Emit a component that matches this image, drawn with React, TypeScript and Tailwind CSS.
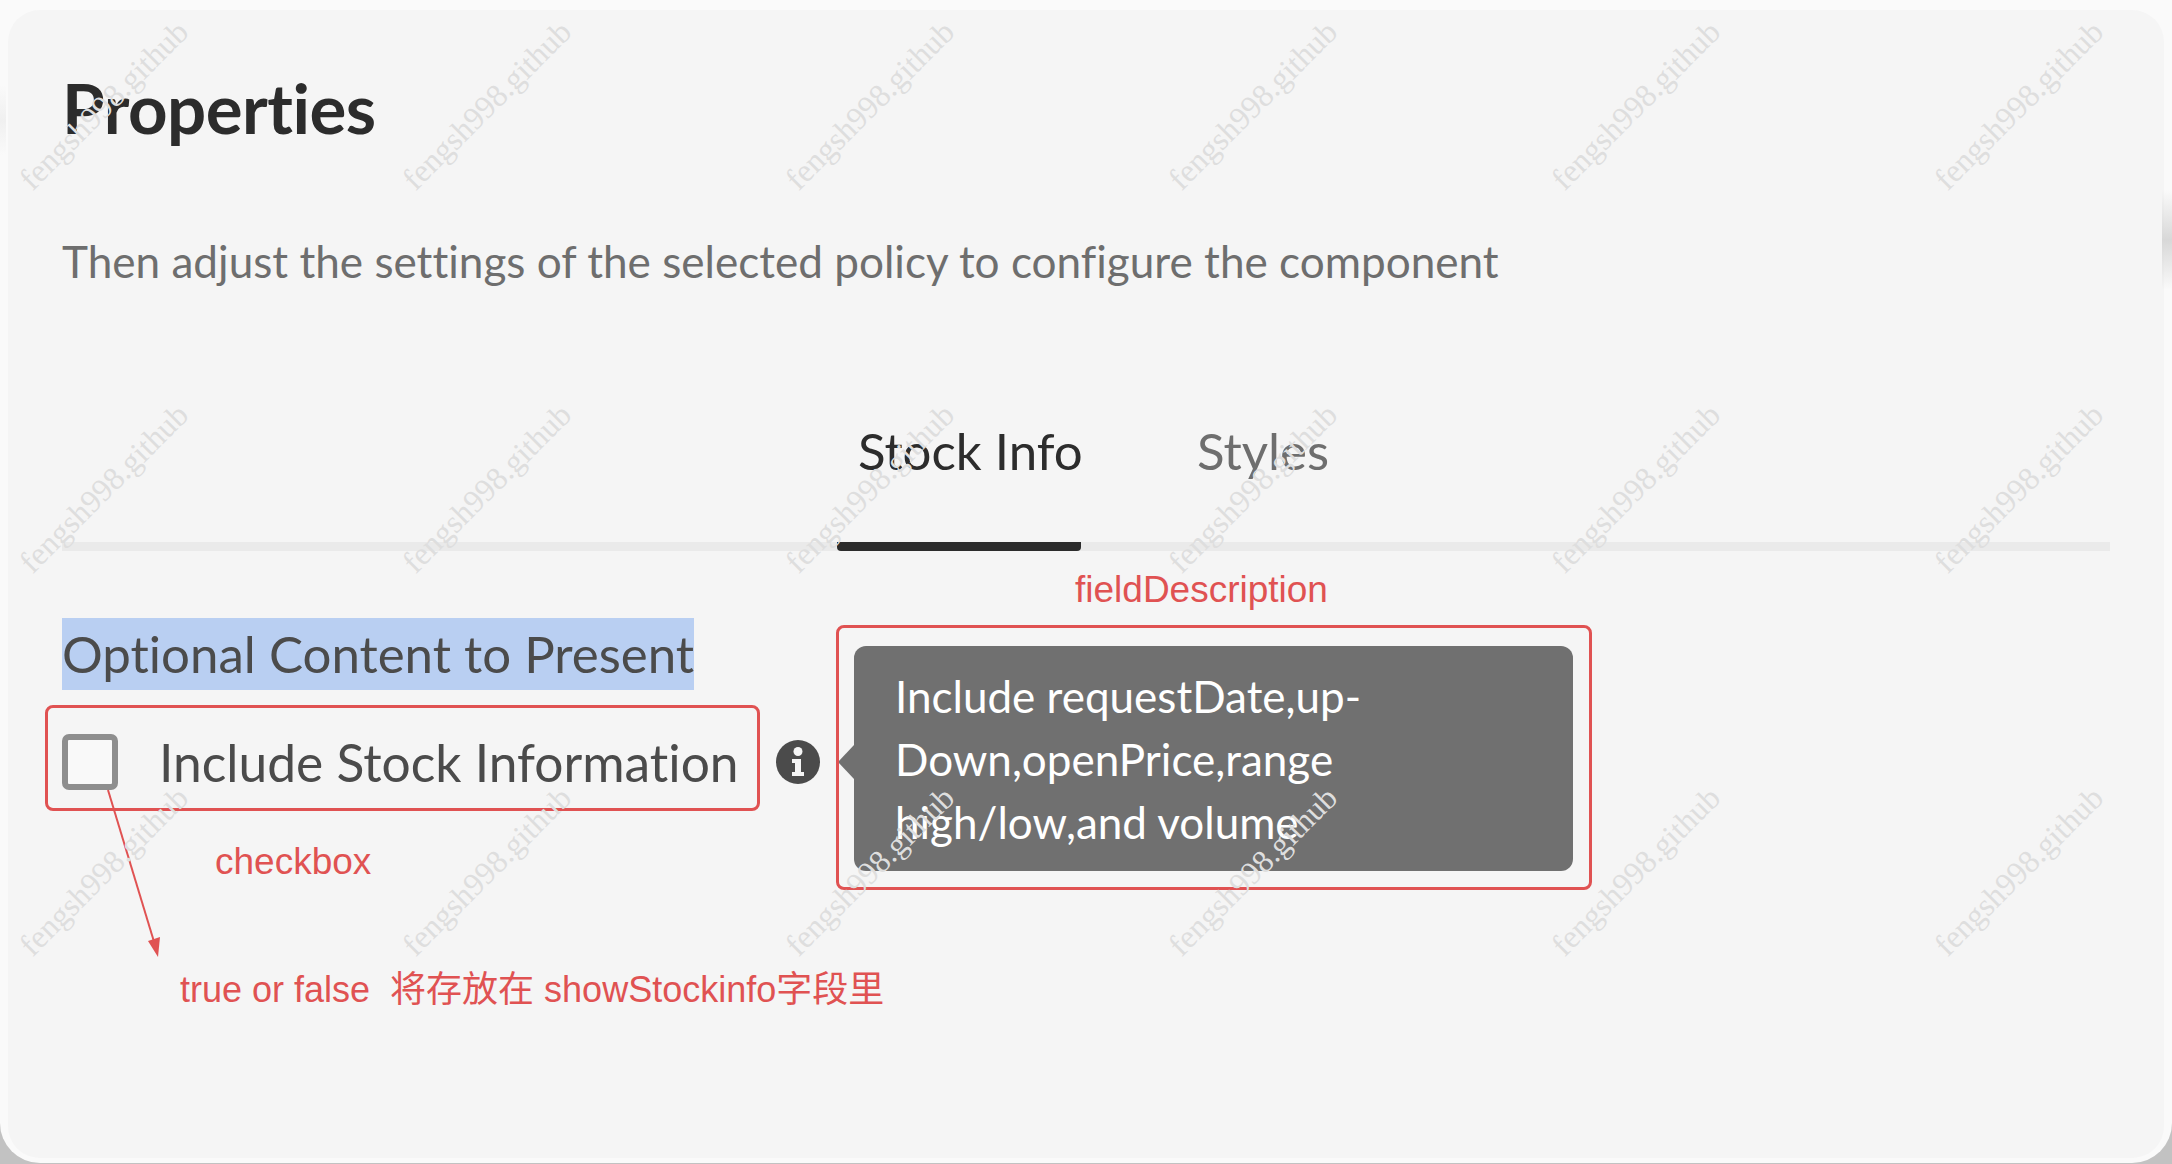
const marks = Array.from({ length: 18 }, (_, i) => i)

function InfoIcon() {
  return (
    <svg viewBox="0 0 44 44" className="w-[44px] h-[44px] shrink-0">
      <circle cx="22" cy="22" r="22" fill="#4b4b4b" />
      <circle cx="22" cy="11.5" r="4.5" fill="#f5f5f5" />
      <path d="M16 19h9v13h3v4H16v-4h3v-9h-3z" fill="#f5f5f5" />
    </svg>
  )
}

export default function App() {
  return (
    <div className="relative w-[2172px] h-[1164px] overflow-hidden bg-[#c2c2c2] font-['Lato','Noto_Sans',sans-serif] [font-variant-ligatures:none]">
      <div className="w-full h-[1163px] bg-[#fafafa] rounded-b-[40px] pt-[10px] px-[8px] pb-[5px]">
        <div className="h-full bg-[#f5f5f5] rounded-[32px] pt-[58px] px-[54px]">
          <h1 className="text-[69px] leading-[80px] font-bold text-[#2c2c2c] tracking-[-0.5px]">Properties</h1>
          <p className="mt-[85px] text-[44.1px] leading-[56px] text-[#6e6e6e]">
            Then adjust the settings of the selected policy to configure the component
          </p>

          <div className="mt-[122px] w-[2048px] border-b-[9px] border-[#eaeaea] flex justify-center h-[140px]">
            <div className="w-[244px] h-[140px] pl-[21px] border-b-[9px] border-[#2c2c2c] rounded-b-[4px] text-[51px] leading-[80px] text-[#2c2c2c] whitespace-nowrap">
              Stock Info
            </div>
            <div className="pl-[116px] pr-[6px] text-[51px] leading-[80px] text-[#6e6e6e]">Styles</div>
          </div>

          <div className="mt-[67px] w-fit h-[72px] bg-[#b9cff2] text-[51px] leading-[72px] text-[#4b4b4b]">
            Optional Content to Present
          </div>

          <div className="mt-[-44px] flex items-center">
            <div className="mt-[6px] flex items-center gap-[41px] w-[676px] shrink-0">
              <div className="w-[56px] h-[56px] rounded-[7px] border-[6px] border-[#8e8e8e] bg-[#f9f9f9] shrink-0" />
              <span className="text-[51.5px] leading-[60px] text-[#4b4b4b] whitespace-nowrap">Include Stock Information</span>
            </div>
            <div className="mt-[6px] ml-[38px]">
              <InfoIcon />
            </div>
            <div className="relative ml-[34px] w-[719px] h-[225px] bg-[#707070] rounded-[12px] pl-[41px] pt-[19px] text-[44px] leading-[63px] text-white">
              <div className="absolute left-[-16px] top-[99px] w-0 h-0 border-y-[17px] border-y-transparent border-r-[16px] border-r-[#707070]" />
              <p>Include requestDate,up-</p>
              <p>Down,openPrice,range</p>
              <p>high/low,and volume</p>
            </div>
          </div>
        </div>
      </div>

      {/* soft shadow left at the window edges */}
      <div className="absolute right-0 top-[190px] w-[10px] h-[100px] bg-linear-to-b from-transparent via-[#d8d8d8] to-transparent" />
      <div className="absolute left-0 top-[85px] w-[6px] h-[70px] bg-linear-to-b from-transparent via-[#f0f0f0] to-transparent" />

      {/* red annotations drawn on top of the screenshot */}
      <div className="absolute left-[45px] top-[705px] w-[715px] h-[106px] border-[3px] border-[#e05252] rounded-[8px]" />
      <div className="absolute left-[836px] top-[625px] w-[756px] h-[265px] border-[3px] border-[#e05252] rounded-[8px]" />
      <span className="absolute left-[1075px] top-[569px] text-[37px] leading-[42px] text-[#e05252] font-['Liberation_Sans',sans-serif]">fieldDescription</span>
      <span className="absolute left-[215px] top-[841px] text-[37px] leading-[42px] text-[#e05252] font-['Liberation_Sans',sans-serif]">checkbox</span>
      <span className="absolute left-[180px] top-[969px] text-[36px] leading-[42px] text-[#e05252] whitespace-pre font-['Liberation_Sans','Noto_Sans_CJK_SC',sans-serif]">true or false  将存放在 showStockinfo字段里</span>
      <svg className="absolute left-[100px] top-[785px] w-[70px] h-[180px]" viewBox="0 0 70 180">
        <path d="M8 5 L55 160" stroke="#e05252" strokeWidth="2" fill="none" />
        <path d="M58 172 L48 156 L60 152 Z" fill="#e05252" />
      </svg>

      {/* watermark grid */}
      <div className="absolute left-[-88px] top-[-87px] grid grid-cols-[repeat(6,383px)] grid-rows-[repeat(3,383px)] pointer-events-none">
        {marks.map((m) => (
          <div key={m} className="flex items-center justify-center">
            <span className="-rotate-45 whitespace-nowrap text-[32px] leading-[36px] text-[#dedede] font-['Liberation_Serif',serif]">
              fengsh998.github
            </span>
          </div>
        ))}
      </div>
    </div>
  )
}
